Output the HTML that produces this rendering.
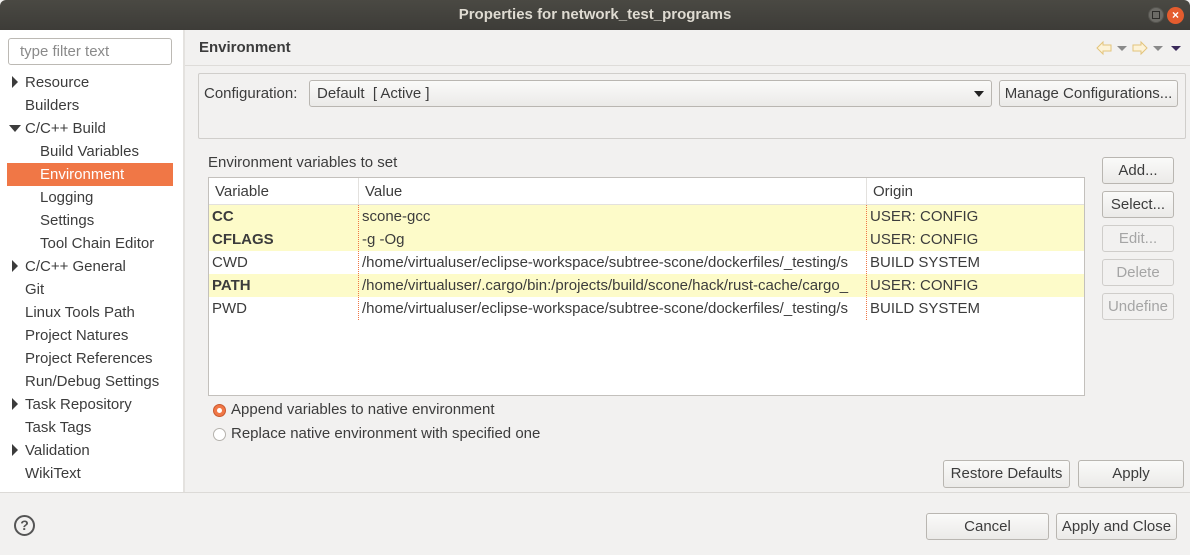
<!DOCTYPE html>
<html><head><style>
*{box-sizing:border-box;margin:0;padding:0}
body{width:1190px;height:555px;background:#f2f1f0;font-family:"Liberation Sans",sans-serif;font-size:15px;color:#3c3c3c;position:relative;overflow:hidden}
.a{position:absolute}
.title{left:0;top:0;width:1190px;height:30px;background:linear-gradient(#4a4943,#3d3c38);border-radius:6px 6px 0 0;color:#dfdbd2;font-weight:bold;text-align:center;line-height:30px;font-size:15px}
.btn{position:absolute;border:1px solid #b9b6b1;border-radius:3px;background:linear-gradient(#fafaf9,#ebeae8);text-align:center;font-size:15px;color:#3c3c3c;white-space:nowrap}
.btn.dis{color:#a5a5a5;border-color:#cfcdca;background:#f2f1f0}
.tree div{position:absolute;height:23px;line-height:23px;font-size:15px;color:#3c3c3c}
.tri{position:absolute;left:12px;width:0;height:0}
.row{position:absolute;left:209px;width:875px;height:23px;line-height:23px}
.row span{position:absolute;top:0;white-space:nowrap}
.y{background:#fdfbc9}
</style></head><body>
<div class="a title">Properties for network_test_programs</div>
<div class="a" style="left:1148px;top:7px;width:16px;height:16px;border-radius:50%;background:#6c6b66;border:1px solid #55544f"></div>
<div class="a" style="left:1152px;top:11px;width:8px;height:8px;border:1px solid #2d2c29"></div>
<div class="a" style="left:1167px;top:7px;width:17px;height:17px;border-radius:50%;background:#e45c2e;color:#fff;font-size:12px;line-height:17px;text-align:center;font-weight:bold">×</div>

<div class="a" style="left:0;top:30px;width:183px;height:462px;background:#fff"></div>
<div class="a" style="left:183px;top:30px;width:2px;height:462px;background:#e4e2df"></div>
<div class="a" style="left:8px;top:38px;width:164px;height:27px;border:1px solid #bcb9b4;border-radius:3px;background:#fff;color:#8a8a8a;padding-left:11px;line-height:25px">type filter text</div>
<div class="tree">
<div style="top:71px;left:25px">Resource</div>
<div style="top:94px;left:25px">Builders</div>
<div style="top:117px;left:25px">C/C++ Build</div>
<div style="top:140px;left:40px">Build Variables</div>
<div style="top:163px;left:7px;width:166px;background:#f07746;color:#fff;padding-left:33px">Environment</div>
<div style="top:186px;left:40px">Logging</div>
<div style="top:209px;left:40px">Settings</div>
<div style="top:232px;left:40px">Tool Chain Editor</div>
<div style="top:255px;left:25px">C/C++ General</div>
<div style="top:278px;left:25px">Git</div>
<div style="top:301px;left:25px">Linux Tools Path</div>
<div style="top:324px;left:25px">Project Natures</div>
<div style="top:347px;left:25px">Project References</div>
<div style="top:370px;left:25px">Run/Debug Settings</div>
<div style="top:393px;left:25px">Task Repository</div>
<div style="top:416px;left:25px">Task Tags</div>
<div style="top:439px;left:25px">Validation</div>
<div style="top:462px;left:25px">WikiText</div>
</div>
<div class="tri" style="top:76px;border-left:6px solid #3c3c3c;border-top:6px solid transparent;border-bottom:6px solid transparent"></div>
<div class="tri" style="left:9px;top:125px;border-top:7px solid #3c3c3c;border-left:6px solid transparent;border-right:6px solid transparent"></div>
<div class="tri" style="top:260px;border-left:6px solid #3c3c3c;border-top:6px solid transparent;border-bottom:6px solid transparent"></div>
<div class="tri" style="top:398px;border-left:6px solid #3c3c3c;border-top:6px solid transparent;border-bottom:6px solid transparent"></div>
<div class="tri" style="top:444px;border-left:6px solid #3c3c3c;border-top:6px solid transparent;border-bottom:6px solid transparent"></div>

<div class="a" style="left:199px;top:39px;font-weight:bold;font-size:15px">Environment</div>
<svg class="a" style="left:1096px;top:40px" width="16" height="16" viewBox="0 0 16 16"><path d="M1 8 L7 2 V5 H15 V11 H7 V14 Z" fill="#fdf3d8" stroke="#e3c47c" stroke-width="1"/></svg>
<div class="a" style="left:1117px;top:46px;border-top:5px solid #8a8a8a;border-left:5px solid transparent;border-right:5px solid transparent"></div>
<svg class="a" style="left:1132px;top:40px" width="16" height="16" viewBox="0 0 16 16"><path d="M15 8 L9 2 V5 H1 V11 H9 V14 Z" fill="#fdf3d8" stroke="#e3c47c" stroke-width="1"/></svg>
<div class="a" style="left:1153px;top:46px;border-top:5px solid #8a8a8a;border-left:5px solid transparent;border-right:5px solid transparent"></div>
<div class="a" style="left:1171px;top:46px;border-top:5px solid #3a2a5a;border-left:5px solid transparent;border-right:5px solid transparent"></div>
<div class="a" style="left:185px;top:65px;width:1005px;height:1px;background:#dedcd9"></div>

<div class="a" style="left:198px;top:73px;width:988px;height:66px;border:1px solid #d0cecb;border-radius:2px"></div>
<div class="a" style="left:204px;top:85px">Configuration:</div>
<div class="btn" style="left:309px;top:80px;width:683px;height:27px;text-align:left;padding-left:7px;line-height:25px">Default &nbsp;[ Active ]</div>
<div class="a" style="left:974px;top:91px;border-top:6px solid #222;border-left:5px solid transparent;border-right:5px solid transparent"></div>
<div class="btn" style="left:999px;top:80px;width:179px;height:27px;line-height:25px">Manage Configurations...</div>

<div class="a" style="left:208px;top:154px">Environment variables to set</div>
<div class="a" style="left:208px;top:177px;width:877px;height:219px;border:1px solid #c3c0bc;background:#fff"></div>
<div class="a" style="left:209px;top:178px;width:875px;height:27px;border-bottom:1px solid #e3e1de;line-height:27px">
<span class="a" style="left:6px">Variable</span><span class="a" style="left:156px">Value</span><span class="a" style="left:664px">Origin</span></div>
<div class="a" style="left:358px;top:178px;width:1px;height:27px;background:#e3e1de"></div>
<div class="a" style="left:866px;top:178px;width:1px;height:27px;background:#e3e1de"></div>
<div class="row y" style="top:205px"><span style="left:3px;font-weight:bold">CC</span><span style="left:153px">scone-gcc</span><span style="left:661px">USER: CONFIG</span></div>
<div class="row y" style="top:228px"><span style="left:3px;font-weight:bold">CFLAGS</span><span style="left:153px">-g -Og</span><span style="left:661px">USER: CONFIG</span></div>
<div class="row" style="top:251px"><span style="left:3px">CWD</span><span style="left:153px;width:504px;overflow:hidden">/home/virtualuser/eclipse-workspace/subtree-scone/dockerfiles/_testing/s</span><span style="left:661px">BUILD SYSTEM</span></div>
<div class="row y" style="top:274px"><span style="left:3px;font-weight:bold">PATH</span><span style="left:153px;width:504px;overflow:hidden">/home/virtualuser/.cargo/bin:/projects/build/scone/hack/rust-cache/cargo_</span><span style="left:661px">USER: CONFIG</span></div>
<div class="row" style="top:297px"><span style="left:3px">PWD</span><span style="left:153px;width:504px;overflow:hidden">/home/virtualuser/eclipse-workspace/subtree-scone/dockerfiles/_testing/s</span><span style="left:661px">BUILD SYSTEM</span></div>
<div class="a" style="left:358px;top:205px;height:115px;border-left:1px dotted #f07746"></div>
<div class="a" style="left:866px;top:205px;height:115px;border-left:1px dotted #f07746"></div>

<div class="btn" style="left:1102px;top:157px;width:72px;height:27px;line-height:25px">Add...</div>
<div class="btn" style="left:1102px;top:191px;width:72px;height:27px;line-height:25px">Select...</div>
<div class="btn dis" style="left:1102px;top:225px;width:72px;height:27px;line-height:25px">Edit...</div>
<div class="btn dis" style="left:1102px;top:259px;width:72px;height:27px;line-height:25px">Delete</div>
<div class="btn dis" style="left:1102px;top:293px;width:72px;height:27px;line-height:25px">Undefine</div>

<div class="a" style="left:213px;top:404px;width:13px;height:13px;border-radius:50%;background:#f07746;border:1px solid #c95a30"><div class="a" style="left:3px;top:3px;width:5px;height:5px;border-radius:50%;background:#fff"></div></div>
<div class="a" style="left:231px;top:401px">Append variables to native environment</div>
<div class="a" style="left:213px;top:428px;width:13px;height:13px;border-radius:50%;background:#fff;border:1px solid #b5b2ad"></div>
<div class="a" style="left:231px;top:425px">Replace native environment with specified one</div>

<div class="btn" style="left:943px;top:460px;width:127px;height:28px;line-height:26px">Restore Defaults</div>
<div class="btn" style="left:1078px;top:460px;width:106px;height:28px;line-height:26px">Apply</div>

<div class="a" style="left:0;top:492px;width:1190px;height:1px;background:#dcdad7"></div>
<div class="a" style="left:14px;top:515px;width:21px;height:21px;border-radius:50%;border:2px solid #555;text-align:center;line-height:17px;font-size:14px;font-weight:bold;color:#555">?</div>
<div class="btn" style="left:926px;top:513px;width:123px;height:27px;line-height:25px">Cancel</div>
<div class="btn" style="left:1056px;top:513px;width:121px;height:27px;line-height:25px">Apply and Close</div>
</body></html>
